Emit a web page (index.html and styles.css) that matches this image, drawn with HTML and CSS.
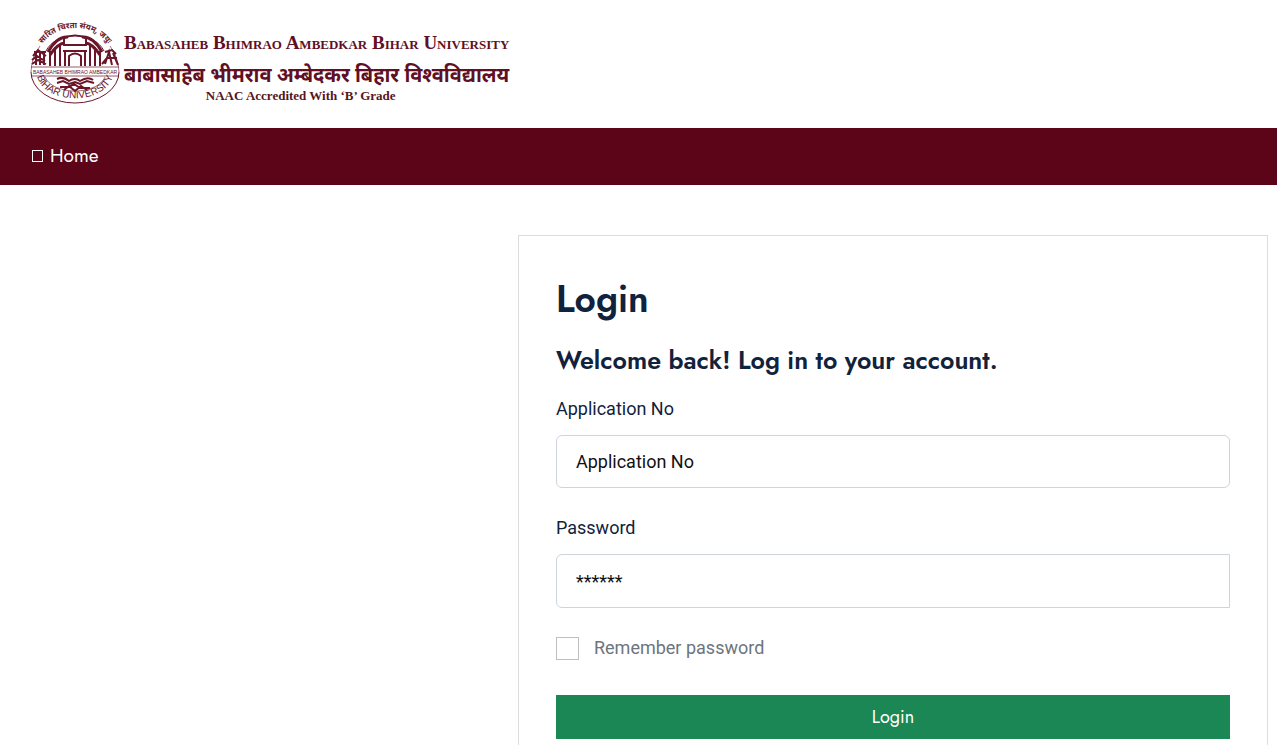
FILE: index.html
```
<!DOCTYPE html>
<html lang="en">
<head>
  <meta charset="UTF-8">
  <meta name="viewport" content="width=device-width, initial-scale=1.0">
  <title>Login</title>
  <link rel="stylesheet" href="styles.css">
</head>
<body>
  <header class="header">
    <a href="#" class="logo">
      <svg class="emblem" viewBox="0 0 90 84" aria-hidden="true">
        <defs>
          <path id="arc-top" d="M7 38 A38 32 0 0 1 83 38"/>
          <path id="arc-bottom" d="M8 57 A38 25 0 0 0 82 57"/>
        </defs>
        <g fill="none" stroke="#6b1529">
          <path d="M1 50 A44 31 0 0 0 89 50" stroke-width="1"/>
          <path d="M1 50 A46 46 0 0 1 10 24 M89 50 A46 46 0 0 0 80 24" stroke-width=".6"/>
          <path d="M15 55 A31 19 0 0 0 75 55" stroke-width=".6"/>
          <path d="M16 29 A31 24 0 0 1 74 29" stroke-width="1"/>
          <path d="M1 45 H89 M1 54 H89" stroke-width=".7"/>
          <!-- gateway -->
          <path d="M18 30 Q27 14 38 15 M72 30 Q63 14 52 15 M20 33 Q28 21 35 21 M70 33 Q62 21 55 21" stroke-width="3"/>
          <path d="M34 22 V16 Q45 11 56 16 V22" stroke-width="2"/>
          <path d="M20 29 V44 M25 25 V44 M30 23 V44 M35 29 V44 M55 29 V44 M60 23 V44 M65 25 V44 M70 29 V44" stroke-width="2"/>
          <path d="M33 23 H57 M33 29 H57" stroke-width="2"/>
          <path d="M39 44 V34 Q45 29 51 34 V44" stroke-width="2"/>
          <!-- trees and figures at the sides -->
          <path d="M4 30 H16 M3 34 L8 28 L16 34 M2 38 L7 34 L15 39 M6 29 V43 M10 29 V43 M14 31 V43 M2 42 L8 38 L16 42" stroke-width="2"/>
          <path d="M75 30 L82 28 L86 32 M75 42 L79 30 L82 43 M83 31 L88 43 M76 36 H87 M72 42 L77 36" stroke-width="2"/>
          <!-- lotus and scroll -->
          <path d="M27 57 Q33 54 39 59 Q45 55 50 59 Q58 54 63 58 M27 61 L33 59 L39 62 L45 60 L50 62 L57 59 L64 61 M30 65 H39 L44 62 L50 66 H60 M34 68 L39 64 L45 69 L51 64 L57 68" stroke-width="2"/>
        </g>
        <text class="emblem-hindi"><textPath href="#arc-top" startOffset="50%" text-anchor="middle">सारित चिरता संयम्, जयुः</textPath></text>
        <text class="emblem-name" x="45" y="52" text-anchor="middle">BABASAHEB BHIMRAO AMBEDKAR</text>
        <text class="emblem-arc"><textPath href="#arc-bottom" startOffset="50%" text-anchor="middle">BIHAR UNIVERSITY</textPath></text>
      </svg>
      <span class="logo-text">
        <span class="logo-name">Babasaheb Bhimrao Ambedkar Bihar University</span>
        <span class="logo-hindi" lang="hi">बाबासाहेब भीमराव अम्बेदकर बिहार विश्वविद्यालय</span>
        <span class="logo-grade">NAAC Accredited With ‘B’ Grade</span>
      </span>
    </a>
  </header>

  <nav class="navbar">
    <a href="#" class="nav-link"><span class="nav-icon"></span>Home</a>
  </nav>

  <main class="content">
    <section class="login-box">
      <h1>Login</h1>
      <h2>Welcome back! Log in to your account.</h2>
      <form>
        <div class="form-group">
          <label for="application">Application No</label>
          <input type="text" id="application" class="form-control" placeholder="Application No">
        </div>
        <div class="form-group">
          <label for="password">Password</label>
          <input type="password" id="password" class="form-control password" placeholder="******">
        </div>
        <div class="remember">
          <input type="checkbox" id="remember">
          <label for="remember">Remember password</label>
        </div>
        <button type="submit" class="btn-login">Login</button>
      </form>
    </section>
  </main>
</body>
</html>
```
FILE: styles.css
```
:root {
  --maroon: #5c0519;
  --logo-color: #5f1024;
  --heading-color: #11223c;
  --green: #1b8754;
  --heading-font: 'Jost', 'Lato', sans-serif;
  --body-font: 'Roboto', sans-serif;
}

* {
  box-sizing: border-box;
  margin: 0;
  padding: 0;
}

/* scrolls without a visible scrollbar */
html {
  scrollbar-width: none;
}

body {
  font-family: var(--body-font);
  font-size: 18px;
  color: var(--heading-color);
  background: #fff;
}

.header {
  display: flex;
  padding: 22px 30px;
}

.logo {
  display: flex;
  gap: 4px;
  color: var(--logo-color);
  text-decoration: none;
}

.emblem {
  width: 90px;
  height: 84px;
  fill: #6b1529;
  overflow: visible;
}

.emblem-hindi {
  font: bold 8px 'Noto Sans', sans-serif;
}

.emblem-name {
  font: 5px 'Liberation Sans', sans-serif;
}

.emblem-arc {
  font: 10px 'Liberation Sans', sans-serif;
}

.logo-text {
  display: flex;
  flex-direction: column;
  align-items: center;
  white-space: nowrap;
}

.logo-name {
  font: bold 19px/42px 'Liberation Serif', serif;
  font-variant: small-caps;
}

.logo-hindi {
  font: bold 20px/22px 'Noto Sans', sans-serif;
}

.logo-grade {
  font: bold 13px/20px 'Liberation Serif', serif;
  margin-right: 32px;
  color: #58151b;
}

.navbar {
  display: flex;
  padding: 0 32px 1px;
  background: var(--maroon);
}

.nav-link {
  display: flex;
  align-items: center;
  gap: 7px;
  font: 19px/56px var(--heading-font);
  color: #fff;
  text-decoration: none;
}

.nav-icon {
  width: 11px;
  height: 12px;
  border: 1px solid #fff;
}

.content {
  padding: 50px 9px 50px 0;
}

.login-box {
  margin-left: 40.85%;
  padding: 37px;
  border: 1px solid #ddd;
}

h1 {
  font: 600 37px/52px var(--heading-font);
  margin-bottom: 16px;
}

h2 {
  font: 600 25px/38px var(--heading-font);
  margin-bottom: 16px;
}

.form-group {
  margin-bottom: 26px;
}

.form-group label {
  display: block;
  line-height: 28px;
  margin-bottom: 12px;
}

.form-control {
  display: block;
  width: 100%;
  height: 53px;
  padding: 0 19px;
  border: 1px solid #ced4da;
  border-radius: 6px;
  font: 18px var(--body-font);
  color: #111;
}

.form-control::placeholder {
  color: #111;
  opacity: 1;
}

.password {
  height: 54px;
  border-radius: 6px 0 0 6px;
}

.remember {
  display: flex;
  align-items: center;
  gap: 15px;
  margin-bottom: 33px;
  line-height: 28px;
  color: #6c757d;
}

.remember input {
  appearance: none;
  width: 23px;
  height: 23px;
  border: 1px solid #bfbfbf;
}

.remember input:checked {
  background: var(--green);
}

.btn-login {
  display: block;
  width: 100%;
  height: 44px;
  border: 0;
  background: var(--green);
  color: #fff;
  font: 18px var(--heading-font);
}
```
